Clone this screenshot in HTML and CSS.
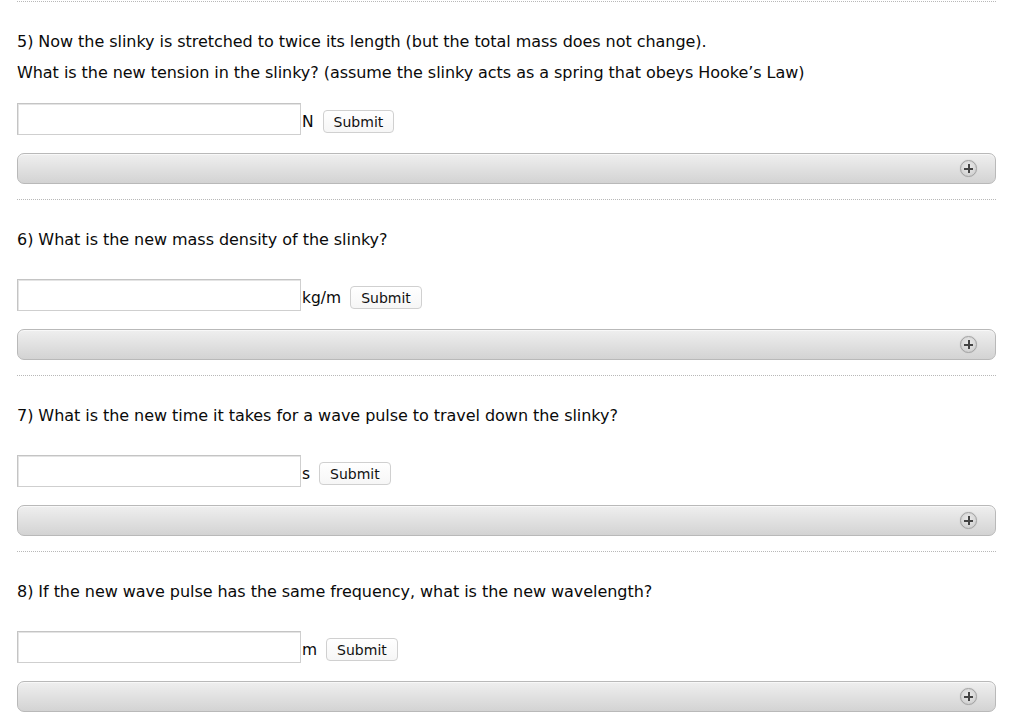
FILE: index.html
```html
<!DOCTYPE html>
<html>
<head>
<meta charset="utf-8">
<link rel="stylesheet" href="styles.css">
</head>
<body>
<div class="page">
  <section class="q">
    <div class="q-text q-text--tight">
      <p>5) Now the slinky is stretched to twice its length (but the total mass does not change).</p>
      <p>What is the new tension in the slinky? (assume the slinky acts as a spring that obeys Hooke’s Law)</p>
    </div>
    <div class="answer">
      <input class="field" type="text">
      <span class="unit">N</span>
      <button class="submit">Submit</button>
    </div>
    <div class="hint"><span class="plus"></span></div>
  </section>

  <section class="q">
    <div class="q-text">
      <p>6) What is the new mass density of the slinky?</p>
    </div>
    <div class="answer">
      <input class="field" type="text">
      <span class="unit">kg/m</span>
      <button class="submit">Submit</button>
    </div>
    <div class="hint"><span class="plus"></span></div>
  </section>

  <section class="q">
    <div class="q-text">
      <p>7) What is the new time it takes for a wave pulse to travel down the slinky?</p>
    </div>
    <div class="answer">
      <input class="field" type="text">
      <span class="unit">s</span>
      <button class="submit">Submit</button>
    </div>
    <div class="hint"><span class="plus"></span></div>
  </section>

  <section class="q">
    <div class="q-text">
      <p>8) If the new wave pulse has the same frequency, what is the new wavelength?</p>
    </div>
    <div class="answer">
      <input class="field" type="text">
      <span class="unit">m</span>
      <button class="submit">Submit</button>
    </div>
    <div class="hint"><span class="plus"></span></div>
  </section>
</div>
</body>
</html>
```
FILE: styles.css
```css
html, body {
  margin: 0;
  padding: 0;
  background: #fff;
}
body {
  font-family: "DejaVu Sans", Verdana, sans-serif;
  color: #0a0a0a;
  padding-top: 1px;
}
.page {
  width: 979px;
  margin-left: 17px;
}
.q {
  border-top: 1px dotted #b8b8b8;
  padding-bottom: 15px;
}
.q-text {
  margin: 24px 0 24px;
  font-size: 16px;
  line-height: 31px;
  letter-spacing: -0.05px;
}
.q-text--tight {
  margin-bottom: 15px;
}
.q-text p {
  margin: 0;
}
.answer {
  display: flex;
  align-items: center;
  height: 32px;
}
.field {
  box-sizing: border-box;
  width: 284px;
  height: 32px;
  margin: 0;
  border: 1px solid #cfcfcf;
  border-top-color: #c4c4c4;
  border-left-color: #c4c4c4;
  box-shadow: inset 1px 1px 0 #e4e4e4;
  background: #fff;
  font-size: 15px;
}
.unit {
  font-size: 15.5px;
  margin-left: 1px;
  margin-right: 9px;
  margin-top: 5px;
  color: #0a0a0a;
}
.submit {
  box-sizing: border-box;
  height: 23px;
  margin-top: 5px;
  padding: 0 10px;
  border: 1px solid #d0d0d0;
  border-radius: 4px;
  background: linear-gradient(#ffffff, #f6f6f6);
  font-family: inherit;
  font-size: 14px;
  color: #111;
}
.hint {
  box-sizing: border-box;
  margin-top: 18px;
  height: 31px;
  border: 1px solid #b9b9b9;
  border-radius: 7px;
  background: linear-gradient(#efefef, #d3d3d3);
  box-shadow: inset 0 1px 0 #f8f8f8;
  display: flex;
  align-items: center;
  justify-content: flex-end;
  padding-right: 18px;
}
.plus {
  position: relative;
  box-sizing: border-box;
  width: 17px;
  height: 17px;
  border-radius: 50%;
  border: 1px solid #a3a3a3;
  background: radial-gradient(circle at 50% 40%, #ececec, #c8c8c8);
  box-shadow: 0 0 1px #b0b0b0;
}
.plus::before,
.plus::after {
  content: "";
  position: absolute;
  background: #444;
}
.plus::before {
  left: 3px;
  top: 7px;
  width: 9px;
  height: 1.5px;
}
.plus::after {
  left: 7px;
  top: 3px;
  width: 1.5px;
  height: 9px;
}
```
